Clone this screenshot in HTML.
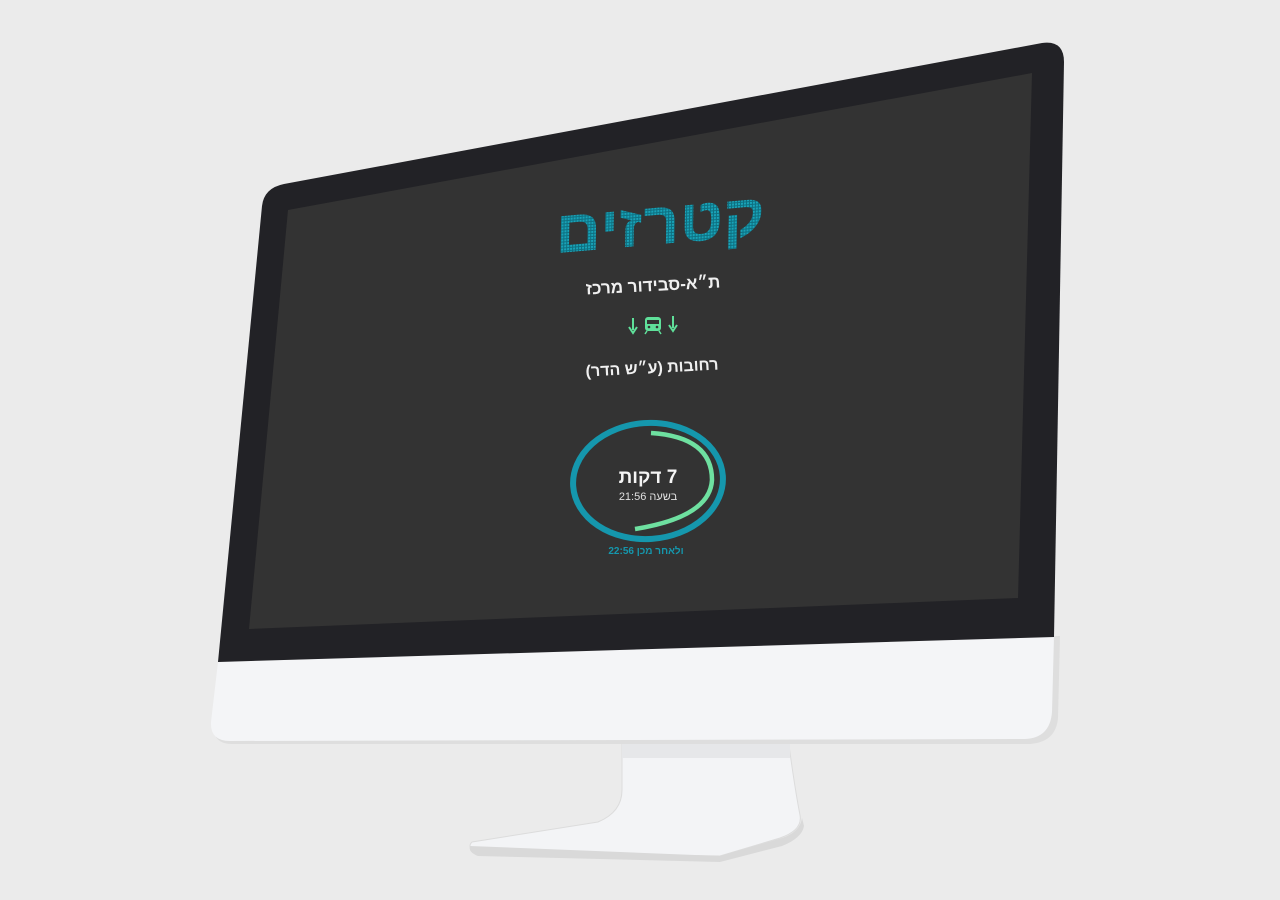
<!DOCTYPE html>
<html><head><meta charset="utf-8"><style>
html,body{margin:0;padding:0;background:#ebebeb;width:1280px;height:900px;overflow:hidden}
svg{display:block}
text{font-family:"Liberation Sans","DejaVu Sans",sans-serif}
</style></head><body>
<svg width="1280" height="900" viewBox="0 0 1280 900">
<defs>
<pattern id="dots" width="3" height="3" patternUnits="userSpaceOnUse">
<rect width="3" height="3" fill="#0e6f80"/><rect width="2" height="2" fill="#19a3b8"/>
</pattern>
</defs>
<path d="M622 738 L788 738 Q795 790 800 815 Q803 830 780 838 L720 856 L478 852 Q466 848 472 842 L598 822 Q622 812 622 790 Z" fill="#f3f4f6" stroke="#dcdcdc" stroke-width="1"/>
<path d="M470 846 L720 856 L782 838 Q800 832 802 818 L804 826 Q802 838 782 846 L720 862 L478 856 Q468 852 470 846 Z" fill="#d9d9d9"/>
<rect x="622" y="740" width="168" height="18" fill="#e6e7e9"/>
<path d="M222 662 L1060 636 L1058 718 Q1056 742 1030 744 L232 744 Q212 744 214 724 Z" fill="#dedede"/>
<path d="M218 662 L1054 636 L1052 712 Q1050 738 1025 739 L230 741 Q210 741 211 722 Z" fill="#f4f5f7"/>
<path d="M284 184 L1042 43 Q1064 40 1064 62 L1054 637 L218 662 L262 206 Q264 188 284 184 Z" fill="#222226"/>
<path d="M288 210 L1032 73 L1018 598 L249 629 Z" fill="#333333"/>
<g transform="translate(660,228) rotate(-5) skewX(-6)">
<text x="0" y="16" text-anchor="middle" direction="rtl" font-size="60" font-weight="bold" fill="url(#dots)" textLength="210" lengthAdjust="spacingAndGlyphs">קטרזים</text>
</g>
<g transform="translate(653,285) rotate(-3)">
<text x="0" y="6" text-anchor="middle" direction="rtl" font-size="17" font-weight="bold" fill="#f0f0f0">ת״א-סבידור מרכז</text>
</g>
<g fill="#5fe09a" stroke="#5fe09a">
<path d="M633 318 L633 330 M629 327 L633 333 L637 327" fill="none" stroke-width="2"/>
<path d="M673 316 L673 328 M669 325 L673 331 L677 325" fill="none" stroke-width="2"/>
<rect x="645" y="317" width="16" height="14" rx="3" stroke="none"/>
<rect x="647" y="320" width="12" height="4" fill="#333" stroke="none"/>
<circle cx="649" cy="327" r="1.3" fill="#333" stroke="none"/><circle cx="657" cy="327" r="1.3" fill="#333" stroke="none"/>
<path d="M647 331 L645 334 M659 331 L661 334" stroke-width="1.5"/>
</g>
<g transform="translate(652,367) rotate(-3)">
<text x="0" y="6" text-anchor="middle" direction="rtl" font-size="16" font-weight="bold" fill="#f0f0f0">רחובות (ע״ש הדר)</text>
</g>
<ellipse cx="648" cy="481" rx="75" ry="58" transform="rotate(-4 648 481)" fill="none" stroke="#1597ad" stroke-width="6"/>
<path d="M651 433 Q712 437 712 480 Q710 517 635 529" fill="none" stroke="#6ee0a0" stroke-width="4.5"/>
<text x="648" y="483" text-anchor="middle" direction="rtl" font-size="19" font-weight="bold" fill="#f4f4f4">7 דקות</text>
<text x="648" y="500" text-anchor="middle" direction="rtl" font-size="11" fill="#e0e0e0">בשעה 21:56</text>
<text x="646" y="554" text-anchor="middle" direction="rtl" font-size="10" font-weight="bold" fill="#1597ad">ולאחר מכן 22:56</text>
</svg>
</body></html>
